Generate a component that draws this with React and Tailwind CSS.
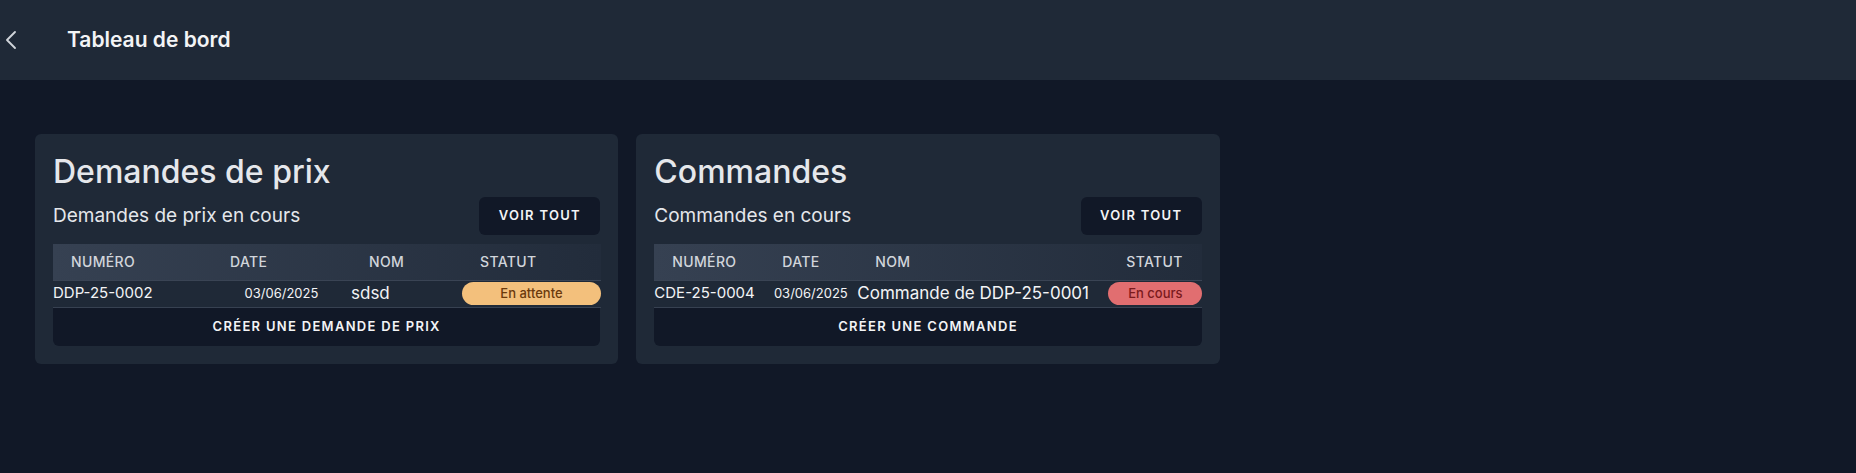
import { ChevronLeft } from "lucide-react";

const cards = [
  {
    title: "Demandes de prix",
    subtitle: "Demandes de prix en cours",
    cols: ["w-[159px]", "w-[139px]", "w-[111px]", "w-[139px]"],
    row: {
      num: "DDP-25-0002",
      date: "03/06/2025",
      name: "sdsd",
      status: "En attente",
      badge: "bg-[#f3c07c] text-[#6b3a0c]",
    },
    create: "Créer une demande de prix",
  },
  {
    title: "Commandes",
    subtitle: "Commandes en cours",
    cols: ["w-[110px]", "w-[93px]", "w-[251px]", "w-[94px]"],
    row: {
      num: "CDE-25-0004",
      date: "03/06/2025",
      name: "Commande de DDP-25-0001",
      status: "En cours",
      badge: "bg-[#e16e70] text-[#7a1a1c]",
    },
    create: "Créer une commande",
  },
];

function DashboardCard({ card }) {
  const { row } = card;
  return (
    <section className="flex flex-col rounded-md bg-[#1f2937] p-[18px]">
      <h2 className="text-[32px] font-medium leading-[40px] text-[#e5e7eb]">{card.title}</h2>
      <div className="mt-[5px] flex items-center justify-between">
        <p className="text-[19px] leading-7 text-[#e5e7eb]">{card.subtitle}</p>
        <button
          type="button"
          className="h-[38px] w-[121px] rounded-md bg-[#111827] text-[13px] font-semibold uppercase tracking-[0.1em] text-[#f3f4f6]"
        >
          Voir tout
        </button>
      </div>

      <table className="mt-[9px] w-full table-fixed border-collapse">
        <colgroup>
          {card.cols.map((c, i) => (
            <col key={i} className={c} />
          ))}
        </colgroup>
        <thead>
          <tr className="h-[36px] border-b border-[#3a4454] bg-gradient-to-r from-[#364152] to-[#222c3b]">
            {["Numéro", "Date", "Nom", "Statut"].map((h) => (
              <th
                key={h}
                className="px-[18px] text-left text-sm font-medium uppercase tracking-wide text-[#d1d5db]"
              >
                {h}
              </th>
            ))}
          </tr>
        </thead>
        <tbody>
          <tr className="h-[27px] border-b border-[#374151]">
            <td className="whitespace-nowrap p-0 text-[15px] text-[#f3f4f6]">{row.num}</td>
            <td className="whitespace-nowrap p-0 text-center text-[13px] text-[#f3f4f6]">{row.date}</td>
            <td className="whitespace-nowrap p-0 text-[17px] text-[#f3f4f6]">{row.name}</td>
            <td className="p-0">
              <div
                className={`flex h-[23px] w-full items-center justify-center rounded-full text-[13px] font-medium ${row.badge}`}
              >
                {row.status}
              </div>
            </td>
          </tr>
        </tbody>
      </table>

      <button
        type="button"
        className="h-[38px] w-full rounded-b-md bg-[#111827] text-[13px] font-semibold uppercase tracking-[0.1em] text-[#f3f4f6]"
      >
        {card.create}
      </button>
    </section>
  );
}

export default function App() {
  return (
    <div className="min-h-[473px] bg-[#111827] font-['Inter',sans-serif]">
      <header className="flex h-[80px] items-center bg-[#1f2937]">
        <button type="button" aria-label="Retour" className="flex w-[21px] justify-center text-[#d1d5db]">
          <ChevronLeft size={32} strokeWidth={1.4} className="shrink-0" />
        </button>
        <h1 className="ml-[46px] text-[21px] font-semibold text-[#f3f4f6]">Tableau de bord</h1>
      </header>

      <main className="grid grid-cols-3 gap-[18px] px-[35px] pt-[54px]">
        {cards.map((c) => (
          <DashboardCard key={c.title} card={c} />
        ))}
      </main>
    </div>
  );
}
